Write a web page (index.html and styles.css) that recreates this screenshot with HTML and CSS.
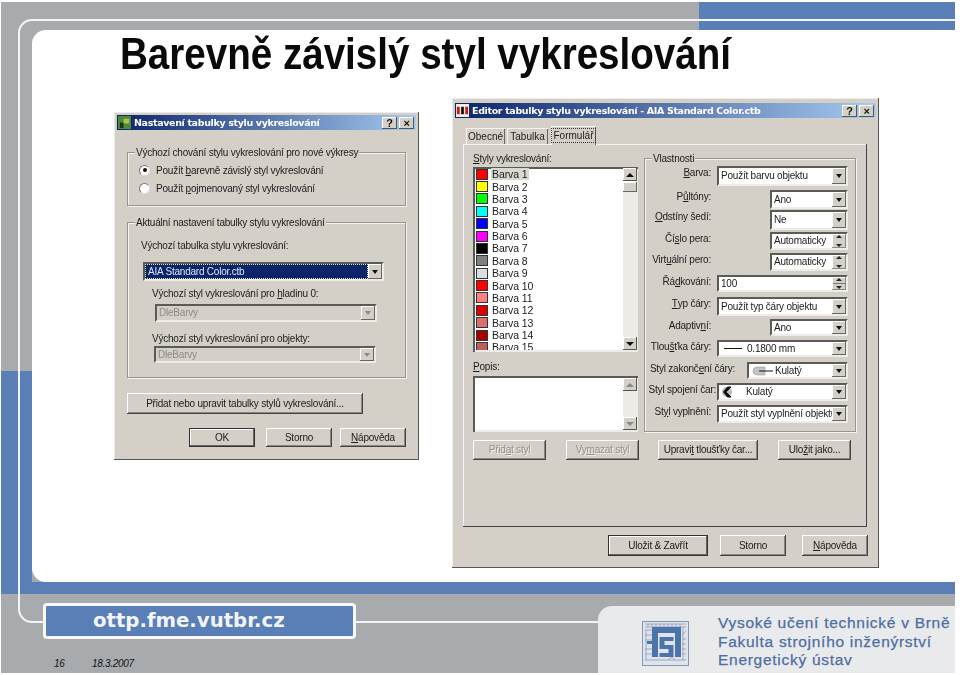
FILE: index.html
```html
<!DOCTYPE html>
<html lang="cs">
<head>
<meta charset="utf-8">
<title>Barevně závislý styl vykreslování</title>
<link rel="stylesheet" href="styles.css">
</head>
<body>
<div class="slide">
  <div class="frame-line"></div>
  <main class="content">
    <h1 class="title">Barevně závislý styl vykreslování</h1>
  </main>
  <footer class="footer">
    <div class="footer-left">
      <div class="url-box">ottp.fme.vutbr.cz</div>
      <div class="meta"><span class="page-no">16</span><span>18.3.2007</span></div>
    </div>
    <div class="school">
      <svg class="logo" viewBox="0 0 47 45" aria-hidden="true">
        <rect x="0.5" y="0.5" width="46" height="44" fill="#dfe4ea" stroke="#8397b5"/>
        <g stroke="#8c9db6" stroke-width="0.8" fill="none">
          <path d="M3 3h41M3 6h41M6 3v3M10 3v3M14 3v3M18 3v3M22 3v3M26 3v3M30 3v3M34 3v3M38 3v3"/>
          <path d="M3 9h7M3 14h7M3 19h7M3 28h7M3 33h7M4 9v30M3 39h41M41 6v33M40 14l4-4M40 18h4M40 23h4M40 28h4M40 33h4M26 39l4-3 3 3"/>
        </g>
        <path fill="#4c74ab" d="M10 6h29v30h-6V12H16v24h-6V23H5v-3h5z"/>
        <path fill="#4c74ab" d="M17.500 16h14v4h-9v4h9v12h-14v-4h9v-4h-9z"/>
      </svg>
      <div class="school-text">
        <div>Vysoké učení technické v Brně</div>
        <div>Fakulta strojního inženýrství</div>
        <div>Energetický ústav</div>
      </div>
    </div>
  </footer>

  <section class="dlg dlg-settings">
    <div class="titlebar">
      <svg class="tb-icon" viewBox="0 0 14 14" aria-hidden="true"><rect width="14" height="14" fill="#4f8a3c"/><rect x="2" y="7" width="4" height="6" fill="#16381a"/><rect x="6" y="3" width="6" height="5" fill="#a8c24a"/></svg>
      <span class="tb-text">Nastavení tabulky stylu vykreslování</span>
      <span class="tb-btn tb-help">?</span><span class="tb-btn">×</span>
    </div>
    <div class="dlg-body-a">
      <div class="group g-behave">
        <span class="legend">Výchozí chování stylu vykreslování pro nové výkresy</span>
        <div class="radio-row"><span class="radio on"></span><span>Použít <u>b</u>arevně závislý styl vykreslování</span></div>
        <div class="radio-row"><span class="radio"></span><span>Použít <u>p</u>ojmenovaný styl vykreslování</span></div>
      </div>
      <div class="group g-current">
        <span class="legend">Aktuální nastavení tabulky stylu vykreslování</span>
        <div class="lab lab-table">Výchozí tabulka stylu vykreslování:</div>
        <div class="sel sel-table"><span class="sel-val sel-picked">AIA Standard Color.ctb</span><span class="drop"></span></div>
        <div class="lab lab-layer">Výchozí styl vykreslování pro <u>h</u>ladinu 0:</div>
        <div class="sel sel-off sel-layer"><span class="sel-val">DleBarvy</span><span class="drop"></span></div>
        <div class="lab lab-obj">Výchozí styl vykreslování pro objekty:</div>
        <div class="sel sel-off sel-obj"><span class="sel-val">DleBarvy</span><span class="drop"></span></div>
      </div>
      <button class="btn btn-wide">Přidat nebo upravit tabulky stylů vykreslování...</button>
      <div class="actions-a">
        <button class="btn btn-def btn-66">OK</button>
        <button class="btn btn-66">Storno</button>
        <button class="btn btn-66"><u>N</u>ápověda</button>
      </div>
    </div>
  </section>

  <section class="dlg dlg-editor">
    <div class="titlebar">
      <svg class="tb-icon" viewBox="0 0 14 14" aria-hidden="true"><rect width="14" height="14" fill="#f2efe0"/><rect x="1" y="3" width="3" height="8" fill="#c81818"/><rect x="5.500" y="3" width="3" height="8" fill="#111"/><rect x="10" y="3" width="3" height="8" fill="#c81818"/></svg>
      <span class="tb-text">Editor tabulky stylu vykreslování - AIA Standard Color.ctb</span>
      <span class="tb-btn tb-help">?</span><span class="tb-btn">×</span>
    </div>
    <div class="tabs">
      <span class="tab t1">Obecné</span>
      <span class="tab t2">Tabulka</span>
      <span class="tab t3"><span class="focus">Formulář</span></span>
    </div>
    <div class="pane">
      <div class="cols">
        <div class="col-left">
          <div class="lab"><u>S</u>tyly vykreslování:</div>
          <div class="list">
            <div class="rows">
              <div class="item"><i class="sw c1"></i><span class="item-t picked">Barva 1</span></div>
              <div class="item"><i class="sw c2"></i><span class="item-t">Barva 2</span></div>
              <div class="item"><i class="sw c3"></i><span class="item-t">Barva 3</span></div>
              <div class="item"><i class="sw c4"></i><span class="item-t">Barva 4</span></div>
              <div class="item"><i class="sw c5"></i><span class="item-t">Barva 5</span></div>
              <div class="item"><i class="sw c6"></i><span class="item-t">Barva 6</span></div>
              <div class="item"><i class="sw c7"></i><span class="item-t">Barva 7</span></div>
              <div class="item"><i class="sw c8"></i><span class="item-t">Barva 8</span></div>
              <div class="item"><i class="sw c9"></i><span class="item-t">Barva 9</span></div>
              <div class="item"><i class="sw c10"></i><span class="item-t">Barva 10</span></div>
              <div class="item"><i class="sw c11"></i><span class="item-t">Barva 11</span></div>
              <div class="item"><i class="sw c12"></i><span class="item-t">Barva 12</span></div>
              <div class="item"><i class="sw c13"></i><span class="item-t">Barva 13</span></div>
              <div class="item"><i class="sw c14"></i><span class="item-t">Barva 14</span></div>
              <div class="item"><i class="sw c15"></i><span class="item-t">Barva 15</span></div>
            </div>
            <div class="sbar"><span class="sb-btn up"></span><span class="sb-thumb"></span><span class="sb-track"></span><span class="sb-btn"></span></div>
          </div>
          <div class="lab lab-popis"><u>P</u>opis:</div>
          <div class="memo">
            <div class="rows"></div>
            <div class="sbar sbar-off"><span class="sb-btn up"></span><span class="sb-track"></span><span class="sb-btn"></span></div>
          </div>
        </div>
        <div class="group g-props">
          <span class="legend">Vlastnosti</span>
          <div class="props">
            <div class="prop"><span class="plab"><u>B</u>arva:</span><div class="sel w-full"><span class="sel-val">Použít barvu objektu</span><span class="drop"></span></div></div>
            <div class="prop"><span class="plab">P<u>ů</u>ltóny:</span><div class="sel w-short"><span class="sel-val">Ano</span><span class="drop"></span></div></div>
            <div class="prop"><span class="plab"><u>O</u>dstíny šedí:</span><div class="sel w-short"><span class="sel-val">Ne</span><span class="drop"></span></div></div>
            <div class="prop"><span class="plab">Čí<u>s</u>lo pera:</span><div class="sel w-short"><span class="sel-val">Automaticky</span><span class="spin"></span></div></div>
            <div class="prop"><span class="plab">Virt<u>u</u>ální pero:</span><div class="sel w-short"><span class="sel-val">Automaticky</span><span class="spin"></span></div></div>
            <div class="prop"><span class="plab">Řá<u>d</u>kování:</span><div class="sel w-full"><span class="sel-val">100</span><span class="spin"></span></div></div>
            <div class="prop"><span class="plab"><u>T</u>yp čáry:</span><div class="sel w-full"><span class="sel-val">Použít typ čáry objektu</span><span class="drop"></span></div></div>
            <div class="prop"><span class="plab">Adaptiv<u>n</u>í:</span><div class="sel w-short"><span class="sel-val">Ano</span><span class="drop"></span></div></div>
            <div class="prop"><span class="plab">Tlou<u>š</u>ťka čáry:</span><div class="sel w-full"><span class="sel-val"><i class="weight"></i>0.1800 mm</span><span class="drop"></span></div></div>
            <div class="prop"><span class="plab plab-wide">Styl zakonč<u>e</u>ní čáry:</span><div class="sel w-mid"><span class="sel-val val-icon"><svg class="cap" viewBox="0 0 22 10" aria-hidden="true"><path d="M14 1H6a4 4 0 0 0 0 8h8z" fill="#c4c4c4" stroke="#999" stroke-width=".6"/><path d="M8 5h14" stroke="#111" stroke-width="1"/></svg>Kulatý</span><span class="drop"></span></div></div>
            <div class="prop"><span class="plab plab-join">Styl spojení čar:</span><div class="sel w-full"><span class="sel-val val-icon"><svg class="join" viewBox="0 0 22 12" aria-hidden="true"><circle cx="6" cy="6" r="5" fill="#bbb"/><path d="M10 1 5 6l5 5H6.500L2.500 6 6.500 1z" fill="#111" stroke="#111"/></svg>Kulatý</span><span class="drop"></span></div></div>
            <div class="prop"><span class="plab">St<u>y</u>l vyplnění:</span><div class="sel w-full"><span class="sel-val">Použít styl vyplnění objektu</span><span class="drop"></span></div></div>
          </div>
        </div>
      </div>
      <div class="actions-b">
        <button class="btn btn-off btn-73">Přid<u>a</u>t styl</button>
        <button class="btn btn-off btn-73">Vy<u>m</u>azat styl</button>
        <button class="btn btn-100 btn-edit">Upravi<u>t</u> tloušťky čar...</button>
        <button class="btn btn-73">Ulo<u>ž</u>it jako...</button>
      </div>
    </div>
    <div class="actions-c">
      <button class="btn btn-def btn-100">Uložit &amp; Zavřít</button>
      <button class="btn btn-66">Storno</button>
      <button class="btn btn-66 btn-last"><u>N</u>ápověda</button>
    </div>
  </section>
</div>
</body>
</html>
```
FILE: styles.css
```css
* { box-sizing: border-box; }
html, body { margin: 0; padding: 0; background: #fff; }
body { width: 960px; height: 675px; overflow: hidden; font-family: "Liberation Sans", Arial, sans-serif; }

.slide {
  position: relative;
  width: 954px;
  height: 671px;
  margin: 2px 0 0 1px;
  padding-top: 28px;
  background-color: #a7abae;
  background-image:
    linear-gradient(#5a7eb6, #5a7eb6),
    linear-gradient(#5a7eb6, #5a7eb6),
    linear-gradient(#5a7eb6, #5a7eb6);
  background-repeat: no-repeat;
  background-size: 256px 28px, 31px 223px, 100% 12px;
  background-position: 698px 0, 0 369px, 0 580px;
}
.frame-line {
  position: absolute;
  left: 17px;
  top: 17px;
  right: 0;
  height: 604px;
  border: 2px solid #f4f5f6;
  border-right: 0;
  border-radius: 14px 0 0 14px;
}
.content {
  position: relative;
  height: 552px;
  margin-left: 31px;
  padding-left: 88px;
  background: #fff;
  border-radius: 14px 0 0 14px;
}
.title {
  margin: 0;
  font-size: 45px;
  line-height: 47px;
  font-weight: 700;
  color: #0a0a0a;
  white-space: nowrap;
  transform: scaleX(.857);
  transform-origin: 0 0;
}

.footer { position: relative; display: flex; height: 79px; margin-top: 12px; }
.footer-left { padding: 9px 0 0 42px; }
.url-box {
  width: 313px;
  height: 36px;
  padding-left: 47px;
  background: #5a7eb6;
  border: 3px solid #f8f8f8;
  border-radius: 4px;
  color: #f2f4f7;
  font-family: "DejaVu Sans", sans-serif;
  font-size: 19.700px;
  line-height: 29px;
  font-weight: 700;
  white-space: nowrap;
}
.meta { display: flex; margin: 18px 0 0 11px; font-size: 10px; line-height: 13px; letter-spacing: -.3px; font-style: italic; color: #111; }
.page-no { width: 38px; }
.school {
  display: flex;
  align-items: flex-start;
  width: 357px;
  height: 67px;
  margin: 12px 0 0 auto;
  padding: 15px 0 0 44px;
  background: #e9eaeb;
  border-radius: 14px 0 0 0;
}
.logo { width: 47px; height: 45px; flex: none; }
.school-text { margin: -7px 0 0 29px; font-size: 15.500px; line-height: 18.500px; letter-spacing: .72px; color: #4d6ea3; white-space: nowrap; -webkit-text-stroke: .25px #4d6ea3; }

/* dialogs */
.dlg {
  position: absolute;
  padding: 3px;
  background: #d4d0c8;
  color: #1c1c1c;
  font-size: 10px;
  letter-spacing: -.22px;
  box-shadow: inset -1px -1px 0 #555, inset 1px 1px 0 #eeece6;
  filter: blur(.3px);
}
.dlg-settings { left: 113px; top: 110px; width: 305px; height: 348px; }
.dlg-editor { left: 451px; top: 96px; width: 427px; height: 470px; padding-top: 5px; }
.titlebar {
  display: flex;
  align-items: center;
  height: 15px;
  padding: 0 2px 0 1px;
  background: linear-gradient(90deg, #0a246a, #a6caf0);
  color: #fff;
}
.tb-icon { width: 13px; height: 13px; flex: none; }
.tb-text { flex: 1; margin-left: 3px; font-family: "DejaVu Sans", sans-serif; font-weight: 700; font-size: 9.500px; letter-spacing: -.35px; line-height: 15px; white-space: nowrap; }
.tb-btn {
  width: 15px;
  height: 12px;
  background: #d4d0c8;
  box-shadow: inset -1px -1px 0 #555, inset 1px 1px 0 #fff;
  color: #111;
  font-weight: 700;
  font-size: 11px;
  line-height: 12px;
  text-align: center;
}
.tb-help { margin-right: 2px; }

.dlg-body-a { padding: 22px 10px 0; }
.group {
  position: relative;
  border: 1px solid #98958f;
  box-shadow: 1px 1px 0 #f4f3ef, inset 1px 1px 0 #f4f3ef;
}
.legend {
  position: absolute;
  left: 7px;
  top: -7px;
  padding: 0 1px;
  background: #d4d0c8;
  line-height: 13px;
  white-space: nowrap;
}
.g-behave { height: 54px; padding-top: 8px; }
.radio-row { display: flex; align-items: center; gap: 6px; height: 18px; padding-left: 11px; }
.radio { position: relative; width: 11px; height: 11px; border-radius: 50%; background: #fff; border: 1px solid #777; border-right-color: #ddd; border-bottom-color: #ddd; }
.radio.on::after { content: ""; position: absolute; left: 2.500px; top: 2.500px; width: 4px; height: 4px; border-radius: 50%; background: #111; }
.g-current { height: 156px; margin-top: 16px; }
.lab { line-height: 14px; white-space: nowrap; }
.lab-table { margin: 16px 0 0 13px; }
.lab-layer { margin: 6px 0 0 24px; }
.lab-obj { margin: 10px 0 0 24px; }

.sel {
  display: flex;
  background: #fff;
  border: 2px solid;
  border-color: #5a5a56 #eeece6 #eeece6 #5a5a56;
  line-height: 14px;
}
.sel-val { flex: 1; display: flex; align-items: center; padding-left: 2px; overflow: hidden; white-space: nowrap; min-width: 0; }
.drop {
  position: relative;
  flex: none;
  width: 14px;
  background: #d4d0c8;
  box-shadow: inset -1px -1px 0 #666, inset 1px 1px 0 #fff;
}
.drop::after {
  content: "";
  position: absolute;
  left: 3.500px;
  top: 50%;
  margin-top: -2px;
  border: 3.500px solid transparent;
  border-top: 4px solid #111;
  border-bottom: 0;
}
.spin {
  position: relative;
  flex: none;
  width: 14px;
  background: linear-gradient(#d4d0c8 47%, #777 47%, #777 53%, #d4d0c8 53%);
  box-shadow: inset -1px -1px 0 #888, inset 1px 1px 0 #fff;
}
.spin::before, .spin::after {
  content: "";
  position: absolute;
  left: 4px;
  border: 3px solid transparent;
}
.spin::before { top: 1px; border-top: 0; border-bottom: 3px solid #222; }
.spin::after { bottom: 1px; border-bottom: 0; border-top: 3px solid #222; }
.sel-table { width: 241px; height: 19px; margin: 9px 0 0 15px; }
.sel-picked { background: #0a246a; color: #dfe4ef; border: 1px dotted #e9e3bd; }
.sel-off { background: #d4d0c8; color: #8b8b86; }
.sel-off .drop::after { border-top-color: #8b8b86; }
.sel-layer { width: 222px; height: 18px; margin: 3px 0 0 27px; }
.sel-obj { width: 222px; height: 17px; margin-left: 26px; }

.btn {
  display: block;
  padding: 0;
  background: #d4d0c8;
  border: 0;
  box-shadow: inset -1px -1px 0 #444, inset 1px 1px 0 #fff, inset -2px -2px 0 #8a8780;
  color: #1c1c1c;
  font: inherit;
  letter-spacing: inherit;
  line-height: 14px;
  white-space: nowrap;
}
.btn-def { box-shadow: inset 0 0 0 1px #333, inset -2px -2px 0 #666, inset 2px 2px 0 #fff; }
.btn-off { color: #94918a; text-shadow: 1px 1px 0 #f2f0ea; }
.btn-wide { width: 236px; height: 21px; margin-top: 15px; }
.actions-a { display: flex; gap: 8px; justify-content: flex-end; height: 19px; margin-top: 14px; }
.actions-a .btn-def { margin-right: 3px; }
.btn-66 { width: 66px; }
.btn-73 { width: 73px; }
.btn-100 { width: 100px; }
.btn-edit { margin-left: -1px; }

.tabs { display: flex; align-items: flex-end; height: 18px; margin-top: 8px; padding-left: 11px; }
.tab { height: 16px; padding-top: 2px; line-height: 13px; text-align: center; background: #d4d0c8; box-shadow: inset 1px 1px 0 #f4f3ef, inset -1px 0 0 #666; letter-spacing: 0; }
.t1 { width: 39px; }
.t2 { width: 41px; margin-left: 2px; }
.t3 { position: relative; z-index: 1; width: 45px; height: 19px; margin: 0 0 -1px 3px; }
.focus { display: inline-block; border: 1px dotted #333; padding: 0 1px; line-height: 13px; }
.pane {
  width: 404px;
  height: 383px;
  margin-left: 8px;
  padding: 8px 9px 0 10px;
  box-shadow: inset -1px -1px 0 #444, inset 1px 1px 0 #f4f3ef;
}
.cols { display: flex; gap: 7px; }
.col-left { width: 165px; flex: none; margin-right: -1px; }
.list, .memo {
  display: flex;
  margin-top: 1px;
  background: #fff;
  box-shadow: inset 2px 2px 0 #5a5a56, inset -2px -2px 0 #eeece6;
}
.list { height: 185px; padding: 1px 1px 2px 3px; overflow: hidden; }
.memo { height: 56px; margin-top: 2px; padding: 2px 1px 2px 3px; }
.rows { flex: 1; overflow: hidden; }
.item { display: flex; align-items: center; height: 12.380px; font-size: 10.500px; letter-spacing: -.1px; }
.sw { flex: none; width: 12px; height: 11px; border: 1px solid #333; }
.item-t { margin-left: 3px; padding: 0 1px; line-height: 12px; }
.picked { background: #dbd8d1; }
.c1 { background: #ff0000; } .c2 { background: #ffff00; } .c3 { background: #00ff00; }
.c4 { background: #00ffff; } .c5 { background: #0000ff; } .c6 { background: #ff00ff; }
.c7 { background: #000; } .c8 { background: #808080; } .c9 { background: #dcdce2; }
.c10 { background: #ff0000; } .c11 { background: #ff8080; } .c12 { background: #d80000; }
.c13 { background: #d87070; } .c14 { background: #a80000; } .c15 { background: #bd6060; }
.sbar { display: flex; flex-direction: column; flex: none; width: 14px; height: 100%; }
.sb-btn {
  position: relative;
  flex: none;
  height: 13px;
  background: #d4d0c8;
  box-shadow: inset -1px -1px 0 #555, inset 1px 1px 0 #fff;
}
.sb-btn::after {
  content: "";
  position: absolute;
  left: 3px;
  top: 5px;
  border: 4px solid transparent;
  border-top: 4px solid #111;
  border-bottom: 0;
}
.sb-btn.up::after { border-top: 0; border-bottom: 4px solid #111; }
.sbar-off .sb-btn::after { border-top-color: #8b8b86; border-bottom-color: #8b8b86; }
.sbar-off .sb-btn.up::after { border-top-color: transparent; }
.sb-thumb { flex: none; height: 10px; margin-top: 1px; background: #d4d0c8; box-shadow: inset -1px -1px 0 #666, inset 1px 1px 0 #fff; }
.sb-track { flex: 1; background: #eeece8; }
.lab-popis { margin-top: 8px; }
.g-props { flex: none; width: 212px; height: 274px; margin-top: 6px; padding: 7px 7px 0 0; }
.props { display: grid; grid-template-rows: 24px 20px 22px 21px 22px 22px 22px 21px 22px 21px 22px 18px; }
.prop { display: flex; align-items: flex-start; justify-content: space-between; }
.plab { width: 66px; line-height: 14px; text-align: right; white-space: nowrap; display: flex; justify-content: flex-end; }
.plab u { flex: none; }
.plab-wide { width: 90px; }
.plab-join { width: 71px; }
.w-full { width: 131px; }
.w-short { width: 78px; }
.w-mid { width: 101px; }
.prop:nth-child(1) .sel { height: 20px; }
.prop:nth-child(2) .sel { height: 19px; }
.prop:nth-child(3) .sel { height: 20px; }
.prop:nth-child(4) .sel, .prop:nth-child(5) .sel, .prop:nth-child(11) .sel, .prop:nth-child(12) .sel { height: 18px; }
.prop:nth-child(6) .sel, .prop:nth-child(8) .sel, .prop:nth-child(9) .sel, .prop:nth-child(10) .sel { height: 17px; }
.prop:nth-child(7) .sel { height: 19px; }
.weight { flex: none; width: 18px; height: 1.500px; margin: 0 5px 0 3px; background: #111; }
.cap { flex: none; width: 22px; height: 10px; margin-right: 2px; }
.join { flex: none; width: 22px; height: 12px; margin-right: 3px; }
.actions-b { display: flex; gap: 20px; height: 20px; margin-top: 8px; }
.actions-c { display: flex; justify-content: flex-end; gap: 12px; height: 21px; margin-top: 8px; padding-right: 8px; }
.btn-last { margin-left: 4px; }
```
